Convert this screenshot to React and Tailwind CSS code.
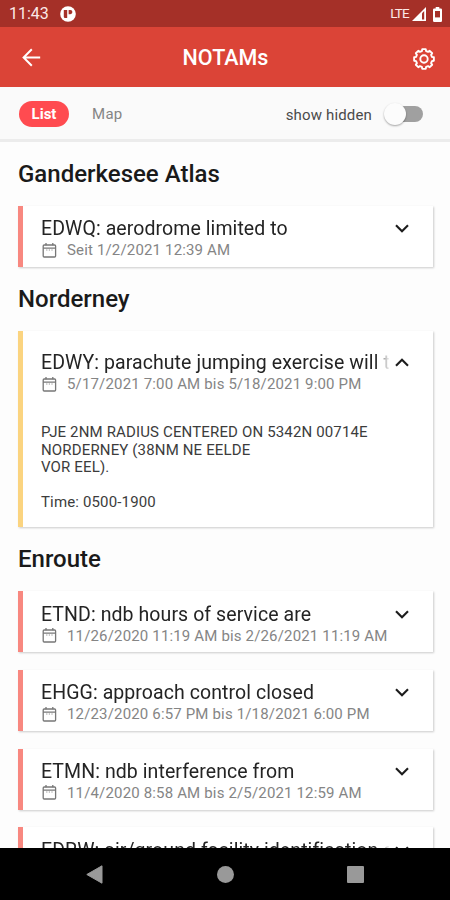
import { useState } from 'react';
import clsx from 'clsx';

const SECTIONS = [
  {
    title: 'Ganderkesee Atlas',
    notams: [{ id: 'EDWQ', text: 'aerodrome limited to', period: 'Seit 1/2/2021 12:39 AM', level: 'high' }],
  },
  {
    title: 'Norderney',
    notams: [
      {
        id: 'EDWY',
        text: 'parachute jumping exercise will take place',
        period: '5/17/2021 7:00 AM bis 5/18/2021 9:00 PM',
        level: 'medium',
        body: ['PJE 2NM RADIUS CENTERED ON 5342N 00714E', 'NORDERNEY (38NM NE EELDE', 'VOR EEL).', '', 'Time: 0500-1900'],
      },
    ],
  },
  {
    title: 'Enroute',
    notams: [
      { id: 'ETND', text: 'ndb hours of service are', period: '11/26/2020 11:19 AM bis 2/26/2021 11:19 AM', level: 'high' },
      { id: 'EHGG', text: 'approach control closed', period: '12/23/2020 6:57 PM bis 1/18/2021 6:00 PM', level: 'high' },
      { id: 'ETMN', text: 'ndb interference from', period: '11/4/2020 8:58 AM bis 2/5/2021 12:59 AM', level: 'high' },
      { id: 'EDRW', text: 'air/ground facility identification changed', period: '', level: 'high' },
    ],
  },
];

// Outline of an eight-toothed gear centred on (12, 12)
const GEAR_PATH = (() => {
  const points = [];
  for (let i = 0; i < 8; i++) {
    [
      [-15, 8.2],
      [-10, 10],
      [10, 10],
      [15, 8.2],
    ].forEach(([offset, r]) => {
      const a = ((i * 45 + offset) * Math.PI) / 180;
      points.push(`${(12 + r * Math.sin(a)).toFixed(2)} ${(12 - r * Math.cos(a)).toFixed(2)}`);
    });
  }
  return `M${points.join('L')}Z`;
})();

function StatusBar() {
  return (
    <div className="flex h-[27px] shrink-0 items-center bg-[#a53028] pl-[9px] pr-[8px] pt-px text-white">
      <span className="text-[16px] leading-none text-[#fbe9e7]">11:43</span>
      <svg className="ml-[11px]" width="16" height="16" viewBox="0 0 16 16">
        <circle cx="8" cy="8" r="7.8" fill="#fff" />
        <path d="M3.8 4h3.4v8H5q-1.2 0-1.2-1.2z" fill="#a53028" />
        <path d="M8.6 4h1.7a2.1 2.1 0 0 1 0 4.2H8.6z" fill="#a53028" />
      </svg>
      <span className="ml-auto text-[13.5px] leading-none tracking-[-0.8px] text-[#fbe9e7]">LTE</span>
      <svg className="ml-[3px]" width="14" height="14" viewBox="0 0 14 14">
        <path d="M14 0v14H0z" fill="#fff" />
        <path d="M10 6.2 12.2 4v8.4H10z" fill="#a53028" />
      </svg>
      <svg className="ml-[7px]" width="9" height="15" viewBox="0 0 9 15">
        <path d="M2.7 0h3.6v1.6h1.5q1.2 0 1.2 1.2v11q0 1.2-1.2 1.2H1.2Q0 15 0 13.8v-11q0-1.2 1.2-1.2h1.5z" fill="#fff" />
        <path d="M2 4h5v6.4H2z" fill="#a53028" />
      </svg>
    </div>
  );
}

function Header() {
  return (
    <header className="flex h-[60px] shrink-0 items-center justify-between bg-[#db4437] pl-[22px] pr-[14px] text-white">
      <button aria-label="Back">
        <svg width="19" height="19" viewBox="0 0 19 19" fill="none" stroke="currentColor" strokeWidth="2">
          <path d="M18.2 9.5H1.8M9.8 1.3 1.6 9.5l8.2 8.2" />
        </svg>
      </button>
      <h1 className="mr-[2px] mt-[2px] text-[21.5px] font-medium leading-none">NOTAMs</h1>
      <button aria-label="Settings" className="mt-[3px]">
        <svg width="24" height="24" viewBox="0 0 24 24" fill="none" stroke="currentColor" strokeWidth="1.9" strokeLinejoin="round">
          <path d={GEAR_PATH} />
          <circle cx="12" cy="12" r="3.7" />
        </svg>
      </button>
    </header>
  );
}

function Toolbar({ hidden, onToggle }) {
  return (
    <div className="flex h-[55px] shrink-0 items-center border-b-[3px] border-[#ececec] bg-[#fafafa] pl-[19px] pr-[27px] pt-[2px]">
      <button className="h-[26px] w-[50px] rounded-full bg-[#ff4b50] text-[15px] font-bold leading-none text-white">List</button>
      <button className="ml-[23px] text-[15px] leading-none tracking-[0.3px] text-[#858585]">Map</button>
      <span className="ml-auto mt-[2px] text-[15px] leading-none tracking-[0.15px] text-[#4a4a4a]">show hidden</span>
      <button role="switch" aria-checked={hidden} onClick={onToggle} className="ml-[12px] flex h-[24px] w-[39px] items-center">
        <span className="z-10 h-[22px] w-[22px] shrink-0 rounded-full bg-[#fcfcfc] shadow-[0_1px_2px_rgba(0,0,0,0.35)]" />
        <span className="-ml-[4px] h-[16px] w-[21px] rounded-r-full bg-[#a0a0a0]" />
      </button>
    </div>
  );
}

function CalendarIcon() {
  return (
    <svg className="ml-px shrink-0" width="15" height="15" viewBox="0 0 15 15" fill="none" stroke="#777" strokeWidth="1.3">
      <rect x="1.2" y="2" width="12.4" height="12" rx="1" />
      <path d="M1.2 5.2h12.4M4 0v2.2M10.8 0v2.2" />
      <path d="M4.2 7h1.2M6.8 7h1.2M9.4 7h1.2" strokeWidth="0.8" />
    </svg>
  );
}

function Chevron({ open }) {
  return (
    <svg className={clsx('shrink-0', open && 'rotate-180')} width="14" height="9" viewBox="0 0 14 9" fill="none" stroke="#1c1c1c" strokeWidth="2.1">
      <path d="M1 1.2 7 7.2l6-6" />
    </svg>
  );
}

function NotamCard({ notam }) {
  return (
    <article
      className={clsx(
        'border-l-[5px] bg-white pl-[18px] pr-[25px] shadow-[1px_1px_2px_rgba(0,0,0,0.2)]',
        notam.level === 'high' ? 'border-[#f88880]' : 'border-[#fbd480]',
        notam.body ? 'h-[196.4px] pt-[20px]' : 'h-[61px] pt-[11.4px]'
      )}
    >
      <div className="flex h-[23px] items-center">
        <h3
          className={clsx(
            'w-[348px] shrink-0 overflow-hidden whitespace-nowrap text-[19.5px] leading-[23px] tracking-[0.08px] text-[#242424]',
            'mask-[linear-gradient(to_right,black_334px,transparent_349px)]'
          )}
        >
          {notam.id}: {notam.text}
        </h3>
        <span className="ml-[6px] flex">
          <Chevron open={Boolean(notam.body)} />
        </span>
      </div>
      <div className="flex h-[20px] items-center">
        <CalendarIcon />
        <span className="ml-[10px] whitespace-nowrap pt-px text-[15px] leading-none tracking-[0.16px] text-[#858585]">{notam.period}</span>
      </div>
      {notam.body && (
        <div className="mt-[30px] text-[15px] leading-[17.5px] tracking-[0.15px] text-[#3c3c3c]">
          {notam.body.map((line, i) => (
            <p key={i} className="min-h-[17.5px] whitespace-nowrap">
              {line}
            </p>
          ))}
        </div>
      )}
    </article>
  );
}

function NavigationBar() {
  return (
    <nav className="flex h-[52px] shrink-0 items-center justify-between bg-black pl-[86px] pr-[86px]">
      <svg width="17" height="19" viewBox="0 0 17 19">
        <path d="M16 .8v17.4L.8 9.5z" fill="#999" stroke="#999" strokeLinejoin="round" />
      </svg>
      <span className="h-[17px] w-[17px] rounded-full bg-[#999]" />
      <span className="h-[17px] w-[17px] rounded-[1px] bg-[#999]" />
    </nav>
  );
}

export default function App() {
  const [showHidden, setShowHidden] = useState(false);

  return (
    <div className="flex h-[900px] w-[450px] flex-col overflow-hidden bg-[#fdfdfd] font-[Roboto,sans-serif]">
      <StatusBar />
      <Header />
      <Toolbar hidden={showHidden} onToggle={() => setShowHidden((v) => !v)} />
      <main className="min-h-0 flex-1 overflow-hidden pl-[18px] pr-[17px]">
        {SECTIONS.map((section) => (
          <section key={section.title}>
            <h2 className="flex h-[64px] items-center text-[24px] font-medium leading-none text-[#1a1a1a]">{section.title}</h2>
            <div className="flex flex-col gap-[17.6px]">
              {section.notams.map((notam) => (
                <NotamCard key={notam.id} notam={notam} />
              ))}
            </div>
          </section>
        ))}
      </main>
      <NavigationBar />
    </div>
  );
}
